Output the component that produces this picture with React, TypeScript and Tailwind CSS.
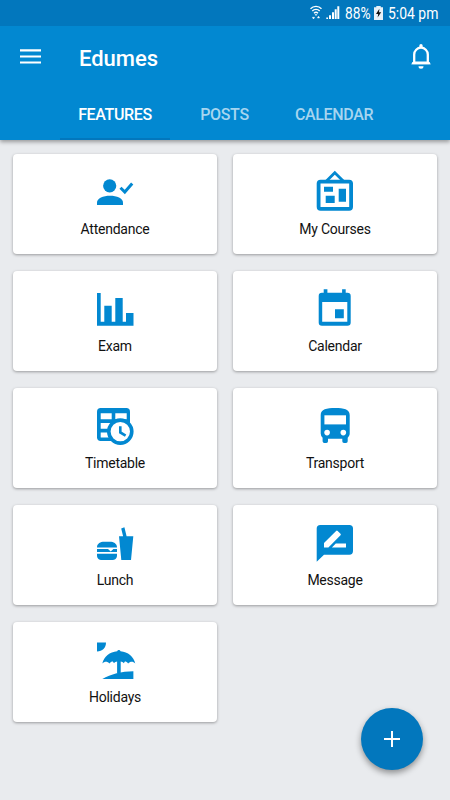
import React from "react";

const features = [
  {
    label: "Attendance",
    icon: (
      <>
        <circle cx="16.7" cy="15.8" r="6.6" />
        <path d="M4 35v-2.6c0-4.2 6.2-6.7 13-6.7s13 2.5 13 6.7V35z" />
        <path d="M27.5 17.8l4.3 4.2L39.2 13.5" fill="none" stroke="#0288d1" strokeWidth="3" />
      </>
    ),
  },
  {
    label: "My Courses",
    icon: (
      <>
        <rect x="5.6" y="11.6" width="32.5" height="27.2" rx="2" fill="none" stroke="#0288d1" strokeWidth="3.8" />
        <path d="M13.5 11l8.3-8.3L30.2 11" fill="none" stroke="#0288d1" strokeWidth="2.8" />
        <path d="M11 16.7h9v5h-9zM12.7 25.7h9V33h-9zM25.7 18.7H33v13h-7.3z" />
      </>
    ),
  },
  {
    label: "Exam",
    icon: <path d="M4 6h3.7v28.7h3.6v-16h7.4v16h3.6V11h7.4v23.7H33V26h7.5v12.7H4z" />,
  },
  {
    label: "Calendar",
    icon: (
      <path
        fillRule="evenodd"
        d="M10.7 2.2h3.7v3.5h14.7V2.2h3.6v3.5h1.7a3.3 3.3 0 0 1 3.3 3.3v26.4a3.3 3.3 0 0 1-3.3 3.3H9a3.3 3.3 0 0 1-3.3-3.3V9A3.3 3.3 0 0 1 9 5.7h1.7zM9.2 15v19.8h25.1V15zM22 22.3h8.8v8.9H22z"
      />
    ),
  },
  {
    label: "Timetable",
    icon: (
      <>
        <rect x="4" y="4" width="33" height="33" rx="3.7" />
        <path d="M7.7 9.3h11v6h-11zM22.3 9.3h11.4v6H22.3zM7.7 19h11v5.7h-11zM7.7 28.4h9v5.2h-9z" fill="#fff" />
        <circle cx="27.3" cy="27.6" r="11.5" fill="#fff" stroke="#0288d1" strokeWidth="3.6" />
        <path d="M27.3 22.2v6.2l5.3 3.2" fill="none" stroke="#0288d1" strokeWidth="2.6" />
      </>
    ),
  },
  {
    label: "Transport",
    icon: (
      <>
        <path d="M7.7 11c0-6 6-7 14.5-7s14.500 1 14.500 7v18.600c0 1.700-.8 3.100-2 4.100v3.600a1.700 1.700 0 0 1-1.700 1.700h-2a1.700 1.700 0 0 1-1.700-1.700v-2.600H15v2.600a1.700 1.700 0 0 1-1.700 1.700h-2a1.700 1.700 0 0 1-1.700-1.700v-3.600a5.500 5.500 0 0 1-1.900-4.100z" />
        <path d="M11.4 11.3H33v9.1H11.4z" fill="#fff" />
        <circle cx="14.1" cy="28.6" r="2.8" fill="#fff" />
        <circle cx="30.3" cy="28.6" r="2.8" fill="#fff" />
      </>
    ),
  },
  {
    label: "Lunch",
    icon: (
      <>
        <path d="M4 26.4c0-4 3.6-5.7 7-5.7h6c3.4 0 7 1.7 7 5.7zM4 28h11l2.7 2.5L20.4 28H24v3H4zM4 32.7h20v1.7c0 2.9-2.2 4.6-5 4.6H9c-2.8 0-5-1.7-5-4.6z" />
        <path d="M26 15.2h4.100L28.200 7.500l3.200-1.200 2.200 8.900h6.700L38 39h-9.700z" />
      </>
    ),
  },
  {
    label: "Message",
    icon: (
      <>
        <path d="M7.3 4h29.1A3.6 3.6 0 0 1 40 7.6v22.5a3.6 3.6 0 0 1-3.6 3.6H11l-7.3 7V7.6A3.6 3.6 0 0 1 7.3 4z" />
        <path d="M11 26.4V22L23.1 9.9q.8-.8 1.6 0l2.8 2.8q.8.8 0 1.6L15.4 26.4zM18.9 26.4l3.9-3.9H33v3.9z" fill="#fff" />
      </>
    ),
  },
  {
    label: "Holidays",
    icon: (
      <>
        <path d="M4 4.500h9c0 5.300-3.700 9-9 9z" />
        <path d="M24.2 13.200a1.700 1.700 0 0 1 3.300 0c7.500.6 13.100 5.300 14.800 12.200-2.300-2.100-5-2.200-7.200.2-1-1.400-1.900-2-3.200-2l-1.100 1.700c-.8-1.200-1.800-1.800-3.100-1.900v11.600h-3.600V23.400c-1.300.1-2.300.7-3.100 1.900l-1.200-1.700c-1.300 0-2.200.6-3.200 2-2.200-2.400-5-2.300-7.300-.2 1.700-6.900 7.400-11.600 14.900-12.200z" />
        <path d="M9.300 41c8.500-5 19.200-7.600 31.100-7.800V41z" />
      </>
    ),
  },
];

const StatusBar = () => (
  <div className="flex h-[26px] items-center bg-[#0277bd] pl-[310px] text-white">
    <svg className="mb-[1px]" width="12" height="15" viewBox="0 0 12 15" fill="none" stroke="currentColor" strokeWidth="1.4">
      <path d="M.5 3.800C3.500.6 8.500.6 11.500 3.800M2.300 6c2-2.200 5.400-2.200 7.400 0M4 8.200c1.200-1.200 2.800-1.200 4 0" />
      <path d="M5.200 9.500h1.600L6 10.600zM2.500 12.300h2L3.500 14zM7.500 12.900h2l-1-1.700z" fill="currentColor" strokeWidth=".6" />
    </svg>
    <svg className="ml-[4px] mb-[1px]" width="14" height="15" viewBox="0 0 14 15" fill="currentColor">
      <path d="M.3 12.500h1.700V14H.3zM3 10.200h2V14H3zM6 7.200h2V14H6zM8.700 4.300h2V14h-2zM11.300 1.200h2V14h-2z" />
    </svg>
    <span className="ml-[5px] mt-[1px] w-[28px] origin-left scale-x-[.81] text-[17px] leading-none">88%</span>
    <svg className="ml-[1px]" width="9" height="14" viewBox="0 0 9 14">
      <path d="M2.300 0h4.400v1.300H9V14H0V1.300h2.300z" fill="#e6f1f8" />
      <path d="M5.400 2.800L2 8h2.200l-.6 3.600L7.200 6.200H5z" fill="#111" />
    </svg>
    <span className="ml-[5px] mt-[1px] origin-left scale-x-[.82] text-[17px] leading-none whitespace-nowrap">5:04 pm</span>
  </div>
);

const Header = () => (
  <header className="relative bg-[#0288d1] text-white shadow-[0_2px_4px_rgba(0,0,0,0.35)]">
    <StatusBar />
    <div className="flex h-[62px] items-center pl-[20px] pr-[17px]">
      <svg width="21" height="16" viewBox="0 0 21 16" fill="currentColor">
        <path d="M0 .3h21v2.100H0zM0 6.500h21v2.100H0zM0 12.500h21v2.100H0z" />
      </svg>
      <h1 className="ml-[38px] mt-[3px] flex-1 text-[22px] leading-none font-medium">Edumes</h1>
      <svg className="mr-[1px] mb-[2px]" width="22" height="26" viewBox="0 0 22 26" fill="none" stroke="currentColor" strokeWidth="2.3">
        <path d="M4.200 20.500V11.500a6.800 6.800 0 0 1 13.600 0v9M2.200 20.200h17.600" />
        <path d="M4.200 18.500L.8 21.300h20.400l-3.400-2.800zM9.300 4V2.700a1.700 1.700 0 0 1 3.400 0V4zM8.500 23.200h5a2.500 2.500 0 0 1-5 0z" fill="currentColor" stroke="none" />
      </svg>
    </div>
    <nav className="flex h-[52px] pl-[60px] text-base font-medium tracking-[-0.35px]">
      <div className="flex w-[110px] items-center justify-center border-b-2 border-[#0277bd] pt-[4px]">FEATURES</div>
      <div className="flex w-[109px] items-center justify-center pt-[2px] text-[#a6d5ef]">POSTS</div>
      <div className="flex w-[110px] items-center justify-center pt-[2px] text-[#a6d5ef]">CALENDAR</div>
    </nav>
  </header>
);

const App = () => {
  return (
    <div className="relative h-[800px] w-[450px] overflow-hidden bg-[#e9ebee] font-['Roboto',sans-serif]">
      <Header />

      <main className="grid grid-cols-2 gap-x-[16px] gap-y-[17px] px-[13px] pt-[14px]">
        {features.map((item) => (
          <div
            key={item.label}
            className="flex h-[100px] flex-col items-center rounded-[4px] bg-white pt-[16px] shadow-[0_1px_3px_rgba(0,0,0,0.35)]"
          >
            <svg width="44" height="44" viewBox="0 0 44 44" fill="#0288d1">
              {item.icon}
            </svg>
            <span className="mt-[7px] text-[14px] leading-[16px] tracking-[-0.25px] text-[#111]">{item.label}</span>
          </div>
        ))}
      </main>

      {/* Floating add button */}
      <button className="absolute right-[27px] bottom-[30px] flex size-[62px] items-center justify-center rounded-full bg-[#0277bd] text-white shadow-[0_3px_6px_rgba(0,0,0,0.4)]">
        <svg width="16" height="16" viewBox="0 0 16 16" fill="currentColor">
          <path d="M7 0h2v7h7v2H9v7H7V9H0V7h7z" />
        </svg>
      </button>
    </div>
  );
};

export default App;
